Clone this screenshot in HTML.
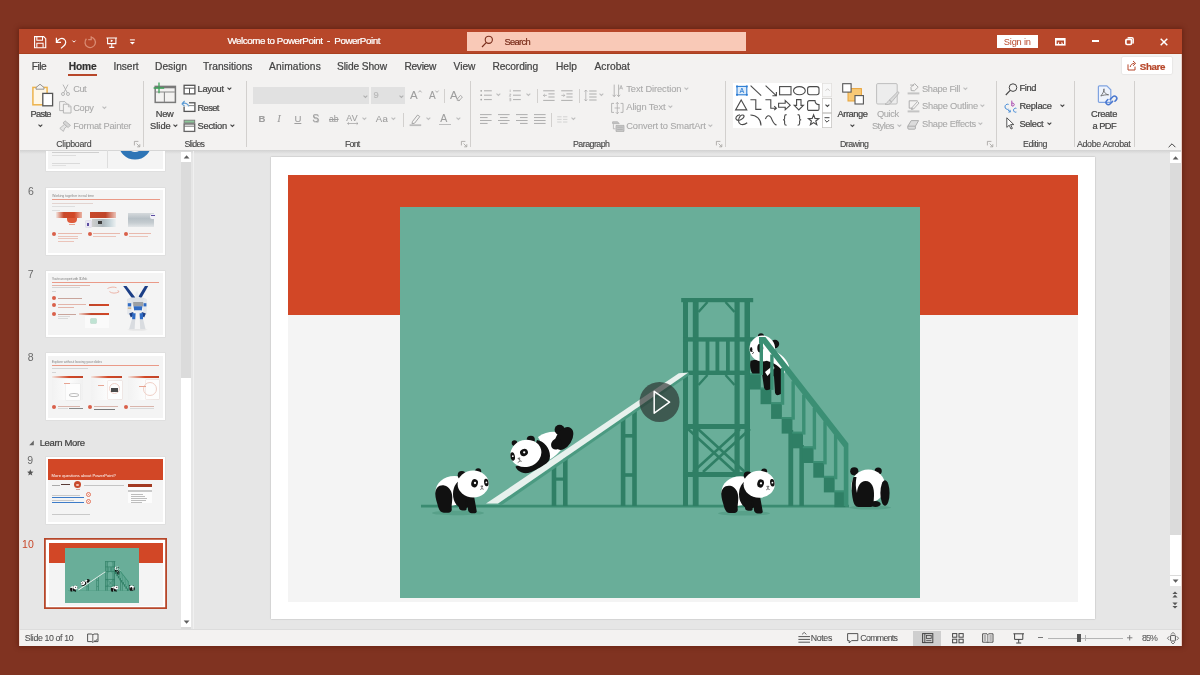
<!DOCTYPE html>
<html><head><meta charset="utf-8"><title>Welcome to PowerPoint - PowerPoint</title>
<style>
html,body{margin:0;padding:0;}
html{background:#803321;}
body{will-change:transform;width:1200px;height:675px;overflow:hidden;background:#803321;position:relative;font-family:"Liberation Sans",sans-serif;}
.r{position:absolute;display:block;overflow:visible;}
.t{position:absolute;white-space:pre;display:block;-webkit-text-stroke:0.220px currentColor;}
svg{shape-rendering:geometricPrecision;}
</style></head><body>
<div class="r" style="left:19px;top:28.5px;width:1163px;height:617.5px;background:#F3F2F1;box-shadow:0 0 5px 1px rgba(70,15,5,0.45);"></div>
<div class="r" style="left:19px;top:28.5px;width:1163px;height:25.5px;background:#B7472A;"></div>
<div class="r" style="left:19px;top:53.4px;width:1163px;height:0.6px;background:#A9401F;"></div>
<div class="r" style="left:19px;top:150px;width:1163px;height:480.2px;background:#E6E6E6;"></div>
<div class="r" style="left:19px;top:150px;width:1163px;height:3.500px;background:linear-gradient(180deg,#D2D2D2,#E6E6E6);"></div>
<div class="r" style="left:19px;top:629.4px;width:1163px;height:0.8px;background:#DCDCDC;"></div>
<div class="r" style="left:19px;top:630.2px;width:1163px;height:15.8px;background:#F3F2F1;"></div>
<svg class="r" style="left:33.8px;top:36.2px;" width="12.3" height="12.3" viewBox="0 0 13 13"><path d="M0.6 0.6h9.6l2.2 2.2v9.6h-11.8z" fill="none" stroke="#fff" stroke-width="1.2"/><path d="M3 0.8v3.8h6v-3.8M3 12.2v-4.6h6.6v4.6" fill="none" stroke="#fff" stroke-width="1.1"/></svg>
<svg class="r" style="left:55.3px;top:34.6px;" width="13" height="14" viewBox="0 0 14 15"><path d="M1.5 3v5h5" fill="none" stroke="#fff" stroke-width="1.3"/><path d="M1.8 7.6c2-3.6 5.4-4.8 8-3.2 2.6 1.8 2.2 5.2-0.4 7.4l-3 2.6" fill="none" stroke="#fff" stroke-width="1.3"/></svg>
<svg class="r" style="left:72.3px;top:39.9px;" width="4" height="3.2" viewBox="0 0 5 4"><path d="M0.5 0.7l2 2 2-2" fill="none" stroke="#fff" stroke-width="1.200"/></svg>
<svg class="r" style="left:84px;top:36px;" width="12" height="13" viewBox="0 0 12 13"><path d="M7 1.2a5.2 5.2 0 1 1 -4.6 1.6M7.2 0.2v3.4h-3" fill="none" stroke="#D98B73" stroke-width="1.3"/></svg>
<svg class="r" style="left:106px;top:36.6px;" width="11.5" height="11.7" viewBox="0 0 13 13"><path d="M0.5 1h12M1.8 1v6.4h9.4v-6.4M6.5 7.4v4M3.6 11.6h5.8" fill="none" stroke="#fff" stroke-width="1.2"/><path d="M5.4 2.6v3.2l2.8-1.6z" fill="#fff"/></svg>
<svg class="r" style="left:129.3px;top:38.6px;" width="7" height="8" viewBox="0 0 7 8"><path d="M0.900 0.900h5" stroke="#fff" stroke-width="1"/><path d="M0.900 3l2.500 2.600 2.500-2.600z" fill="#fff"/></svg>
<span class="t" style="left:227.50px;top:34.00px;font-size:9.8px;line-height:13px;color:#fff;letter-spacing:-0.449px;">Welcome to PowerPoint  -  PowerPoint</span>
<div class="r" style="left:467px;top:32px;width:279px;height:19px;background:#F9C9B7;"></div>
<svg class="r" style="left:481px;top:35px;" width="13" height="13" viewBox="0 0 13 13"><circle cx="7.8" cy="4.8" r="3.6" fill="none" stroke="#7A2E1C" stroke-width="1.1"/><path d="M5.2 7.6l-4.2 4.4" stroke="#7A2E1C" stroke-width="1.2"/></svg>
<span class="t" style="left:504.50px;top:35.50px;font-size:9.3px;line-height:12px;color:#7A2E1C;letter-spacing:-0.661px;">Search</span>
<div class="r" style="left:997px;top:35px;width:41px;height:13px;background:#fff;"></div>
<span class="t" style="left:1003.80px;top:35.60px;font-size:9.3px;line-height:12px;color:#B9492C;letter-spacing:-0.205px;-webkit-text-stroke:0;">Sign in</span>
<svg class="r" style="left:1054.8px;top:37.8px;" width="10.6" height="7.6" viewBox="0 0 10.6 7.6"><rect x="0.800" y="0.800" width="9" height="6" fill="none" stroke="#fff" stroke-width="1.600"/><path d="M0.800 1.600h9" stroke="#fff" stroke-width="1.800"/><path d="M2.600 5.200l1.500-1.500v3zM8 5.200l-1.500-1.500v3z" fill="#fff"/></svg>
<div class="r" style="left:1091.6px;top:39.9px;width:7.4px;height:1.7px;background:#fff;"></div>
<svg class="r" style="left:1125px;top:37px;" width="9" height="8.5" viewBox="0 0 9 8.5"><rect x="0.900" y="2.300" width="5.600" height="5.200" rx="1.200" fill="none" stroke="#fff" stroke-width="1.700"/><path d="M2.800 1.200a1 1 0 0 1 0.800 -0.400h3.400a1.200 1.200 0 0 1 1.200 1.200v3.400a1 1 0 0 1 -0.600 0.900" fill="none" stroke="#fff" stroke-width="1.400"/></svg>
<svg class="r" style="left:1160.2px;top:37.8px;" width="7.8" height="7.8" viewBox="0 0 7.8 7.8"><path d="M0.700 0.700l6.600 6.600M7.300 0.700l-6.600 6.600" stroke="#fff" stroke-width="1.500"/></svg>
<span class="t" style="left:31.70px;top:59.70px;font-size:10.2px;line-height:13px;color:#444;letter-spacing:-0.484px;">File</span>
<span class="t" style="left:68.70px;top:59.70px;font-size:10.2px;line-height:13px;color:#333;letter-spacing:-0.085px;font-weight:bold;">Home</span>
<span class="t" style="left:113.40px;top:59.70px;font-size:10.2px;line-height:13px;color:#444;letter-spacing:-0.052px;">Insert</span>
<span class="t" style="left:155.00px;top:59.70px;font-size:10.2px;line-height:13px;color:#444;letter-spacing:0.041px;">Design</span>
<span class="t" style="left:203.00px;top:59.70px;font-size:10.2px;line-height:13px;color:#444;letter-spacing:-0.001px;">Transitions</span>
<span class="t" style="left:269.00px;top:59.70px;font-size:10.2px;line-height:13px;color:#444;letter-spacing:0.154px;">Animations</span>
<span class="t" style="left:337.00px;top:59.70px;font-size:10.2px;line-height:13px;color:#444;letter-spacing:-0.103px;">Slide Show</span>
<span class="t" style="left:404.50px;top:59.70px;font-size:10.2px;line-height:13px;color:#444;letter-spacing:-0.324px;">Review</span>
<span class="t" style="left:453.50px;top:59.70px;font-size:10.2px;line-height:13px;color:#444;letter-spacing:0.019px;">View</span>
<span class="t" style="left:492.50px;top:59.70px;font-size:10.2px;line-height:13px;color:#444;letter-spacing:-0.110px;">Recording</span>
<span class="t" style="left:556.00px;top:59.70px;font-size:10.2px;line-height:13px;color:#444;letter-spacing:0.005px;">Help</span>
<span class="t" style="left:594.50px;top:59.70px;font-size:10.2px;line-height:13px;color:#444;letter-spacing:0.050px;">Acrobat</span>
<div class="r" style="left:68px;top:74.3px;width:29.3px;height:2.1px;background:#B7472A;"></div>
<div class="r" style="left:1122.2px;top:56.8px;width:50px;height:17.2px;background:#fff;box-shadow:0 0 1.500px rgba(0,0,0,0.220);border-radius:1px;"></div>
<svg class="r" style="left:1127px;top:60px;" width="10" height="11" viewBox="0 0 10 11"><path d="M1 4.4v5.6h7v-3.4M3.2 7c0.4-2.4 2-3.6 4.2-3.6M6 1l2.6 2.4-2.6 2.4" fill="none" stroke="#B7472A" stroke-width="1"/></svg>
<span class="t" style="left:1139.80px;top:59.70px;font-size:9.8px;line-height:13px;color:#B7472A;letter-spacing:-0.408px;font-weight:bold;">Share</span>
<div class="r" style="left:142.5px;top:80.5px;width:0.9px;height:66px;background:#D2D0CE;"></div>
<div class="r" style="left:246.3px;top:80.5px;width:0.9px;height:66px;background:#D2D0CE;"></div>
<div class="r" style="left:470px;top:80.5px;width:0.9px;height:66px;background:#D2D0CE;"></div>
<div class="r" style="left:724.8px;top:80.5px;width:0.9px;height:66px;background:#D2D0CE;"></div>
<div class="r" style="left:996.2px;top:80.5px;width:0.9px;height:66px;background:#D2D0CE;"></div>
<div class="r" style="left:1074.4px;top:80.5px;width:0.9px;height:66px;background:#D2D0CE;"></div>
<div class="r" style="left:1133.5px;top:80.5px;width:0.9px;height:66px;background:#D2D0CE;"></div>
<span class="t" style="left:56.30px;top:138.80px;font-size:8.8px;line-height:11px;color:#444;letter-spacing:-0.296px;-webkit-text-stroke:0.100px currentColor;">Clipboard</span>
<svg class="r" style="left:133.8px;top:141px;" width="6.5" height="6.5" viewBox="0 0 6.5 6.5"><path d="M0.4 4.4v-4h4" fill="none" stroke="#A19F9D" stroke-width="0.800"/><path d="M2.6 2.6l3 3M5.8 3.2v2.6h-2.6" fill="none" stroke="#A19F9D" stroke-width="0.800"/></svg>
<span class="t" style="left:184.50px;top:138.80px;font-size:8.8px;line-height:11px;color:#444;letter-spacing:-0.695px;-webkit-text-stroke:0.100px currentColor;">Slides</span>
<span class="t" style="left:345.00px;top:138.80px;font-size:8.8px;line-height:11px;color:#444;letter-spacing:-0.777px;-webkit-text-stroke:0.100px currentColor;">Font</span>
<svg class="r" style="left:461.2px;top:141px;" width="6.5" height="6.5" viewBox="0 0 6.5 6.5"><path d="M0.4 4.4v-4h4" fill="none" stroke="#A19F9D" stroke-width="0.800"/><path d="M2.6 2.6l3 3M5.8 3.2v2.6h-2.6" fill="none" stroke="#A19F9D" stroke-width="0.800"/></svg>
<span class="t" style="left:573.00px;top:138.80px;font-size:8.8px;line-height:11px;color:#444;letter-spacing:-0.511px;-webkit-text-stroke:0.100px currentColor;">Paragraph</span>
<svg class="r" style="left:715.8px;top:141px;" width="6.5" height="6.5" viewBox="0 0 6.5 6.5"><path d="M0.4 4.4v-4h4" fill="none" stroke="#A19F9D" stroke-width="0.800"/><path d="M2.6 2.6l3 3M5.8 3.2v2.6h-2.6" fill="none" stroke="#A19F9D" stroke-width="0.800"/></svg>
<span class="t" style="left:840.00px;top:138.80px;font-size:8.8px;line-height:11px;color:#444;letter-spacing:-0.569px;-webkit-text-stroke:0.100px currentColor;">Drawing</span>
<svg class="r" style="left:986.5px;top:141px;" width="6.5" height="6.5" viewBox="0 0 6.5 6.5"><path d="M0.4 4.4v-4h4" fill="none" stroke="#A19F9D" stroke-width="0.800"/><path d="M2.6 2.6l3 3M5.8 3.2v2.6h-2.6" fill="none" stroke="#A19F9D" stroke-width="0.800"/></svg>
<span class="t" style="left:1023.00px;top:138.80px;font-size:8.8px;line-height:11px;color:#444;letter-spacing:-0.415px;-webkit-text-stroke:0.100px currentColor;">Editing</span>
<span class="t" style="left:1077.00px;top:138.80px;font-size:8.8px;line-height:11px;color:#444;letter-spacing:-0.333px;-webkit-text-stroke:0.100px currentColor;">Adobe Acrobat</span>
<svg class="r" style="left:1167.5px;top:142.5px;" width="8" height="5" viewBox="0 0 8 5"><path d="M0.6 4.2l3.4-3.4 3.4 3.4" fill="none" stroke="#444" stroke-width="1"/></svg>
<span class="t" style="left:30.50px;top:107.50px;font-size:9.3px;line-height:12px;color:#444444;letter-spacing:-0.696px;">Paste</span>
<svg class="r" style="left:37.6px;top:123.5px;" width="4.8" height="3.2" viewBox="0 0 4.8 3.2"><path d="M0.500 0.600l1.900 1.900 1.900-1.900" fill="none" stroke="#444" stroke-width="1.050"/></svg>
<span class="t" style="left:73.20px;top:83.20px;font-size:9.3px;line-height:12px;color:#A9A9A9;letter-spacing:-0.491px;-webkit-text-stroke:0.080px currentColor;">Cut</span>
<span class="t" style="left:73.20px;top:101.70px;font-size:9.3px;line-height:12px;color:#A9A9A9;letter-spacing:-0.303px;-webkit-text-stroke:0.080px currentColor;">Copy</span>
<svg class="r" style="left:102.1px;top:105.8px;" width="4.8" height="3.2" viewBox="0 0 4.8 3.2"><path d="M0.500 0.600l1.900 1.900 1.900-1.900" fill="none" stroke="#BDBDBD" stroke-width="1.050"/></svg>
<span class="t" style="left:73.20px;top:119.70px;font-size:9.3px;line-height:12px;color:#A9A9A9;letter-spacing:-0.250px;-webkit-text-stroke:0.080px currentColor;">Format Painter</span>
<span class="t" style="left:155.80px;top:107.50px;font-size:9.3px;line-height:12px;color:#444444;letter-spacing:-0.368px;">New</span>
<span class="t" style="left:150.00px;top:119.70px;font-size:9.3px;line-height:12px;color:#444444;letter-spacing:0.024px;">Slide</span>
<svg class="r" style="left:172.6px;top:123.8px;" width="4.8" height="3.2" viewBox="0 0 4.8 3.2"><path d="M0.500 0.600l1.900 1.900 1.900-1.900" fill="none" stroke="#444" stroke-width="1.050"/></svg>
<span class="t" style="left:197.50px;top:83.20px;font-size:9.3px;line-height:12px;color:#444444;letter-spacing:-0.287px;">Layout</span>
<svg class="r" style="left:226.9px;top:87.3px;" width="4.8" height="3.2" viewBox="0 0 4.8 3.2"><path d="M0.500 0.600l1.900 1.900 1.900-1.900" fill="none" stroke="#444" stroke-width="1.050"/></svg>
<span class="t" style="left:197.50px;top:101.70px;font-size:9.3px;line-height:12px;color:#444444;letter-spacing:-0.619px;">Reset</span>
<span class="t" style="left:197.50px;top:119.70px;font-size:9.3px;line-height:12px;color:#444444;letter-spacing:-0.217px;">Section</span>
<svg class="r" style="left:230.1px;top:123.8px;" width="4.8" height="3.2" viewBox="0 0 4.8 3.2"><path d="M0.500 0.600l1.900 1.900 1.900-1.900" fill="none" stroke="#444" stroke-width="1.050"/></svg>
<div class="r" style="left:253px;top:87px;width:116.3px;height:16.8px;background:#E1E1E1;"></div>
<svg class="r" style="left:362.6px;top:94.5px;" width="4.8" height="3.2" viewBox="0 0 4.8 3.2"><path d="M0.500 0.600l1.900 1.900 1.900-1.900" fill="none" stroke="#B0B0B0" stroke-width="1.050"/></svg>
<div class="r" style="left:371.3px;top:87px;width:33.7px;height:16.8px;background:#E1E1E1;"></div>
<svg class="r" style="left:398.6px;top:94.5px;" width="4.8" height="3.2" viewBox="0 0 4.8 3.2"><path d="M0.500 0.600l1.900 1.900 1.900-1.900" fill="none" stroke="#B0B0B0" stroke-width="1.050"/></svg>
<span class="t" style="left:373.60px;top:89.20px;font-size:9.3px;line-height:12px;color:#B9B9B9;letter-spacing:0.000px;">9</span>
<span class="t" style="left:410.00px;top:87.70px;font-size:11.5px;line-height:15px;color:#9E9E9E;letter-spacing:0.000px;-webkit-text-stroke:0.080px currentColor;">A</span>
<svg class="r" style="left:417.6px;top:89.5px;" width="4" height="3" viewBox="0 0 4 3"><path d="M0.4 2.4l1.6-1.8 1.6 1.8" fill="none" stroke="#9E9E9E" stroke-width="0.8"/></svg>
<span class="t" style="left:429.00px;top:89.30px;font-size:10px;line-height:13px;color:#9E9E9E;letter-spacing:0.000px;-webkit-text-stroke:0.080px currentColor;">A</span>
<svg class="r" style="left:435.4px;top:89.5px;" width="4" height="3" viewBox="0 0 4 3"><path d="M0.4 0.6l1.6 1.8 1.6-1.8" fill="none" stroke="#9E9E9E" stroke-width="0.8"/></svg>
<div class="r" style="left:444.2px;top:88.8px;width:0.9px;height:13.8px;background:#D2D0CE;"></div>
<span class="t" style="left:450.00px;top:87.70px;font-size:11.5px;line-height:15px;color:#9E9E9E;letter-spacing:0.000px;-webkit-text-stroke:0.080px currentColor;">A</span>
<svg class="r" style="left:456px;top:94px;" width="7" height="7" viewBox="0 0 7 7"><path d="M1 5.4l3.4-4 2 1.6-3.4 4zM0.8 6.2h3" fill="none" stroke="#9E9E9E" stroke-width="0.8"/></svg>
<span class="t" style="left:258.60px;top:113.30px;font-size:9.6px;line-height:12px;color:#9E9E9E;letter-spacing:0.000px;font-weight:bold;-webkit-text-stroke:0.080px currentColor;">B</span>
<span class="t" style="left:277.30px;top:113.30px;font-size:9.6px;line-height:12px;color:#9E9E9E;letter-spacing:0.000px;font-style:italic;font-family:'Liberation Serif',serif;font-size:10.5px;-webkit-text-stroke:0.080px currentColor;">I</span>
<span class="t" style="left:294.40px;top:113.30px;font-size:9.6px;line-height:12px;color:#9E9E9E;letter-spacing:0.000px;text-decoration:underline;-webkit-text-stroke:0.080px currentColor;">U</span>
<span class="t" style="left:312.20px;top:111.70px;font-size:10.4px;line-height:14px;color:#9E9E9E;letter-spacing:0.000px;text-shadow:0.500px 0.500px 0.500px #C8C8C8;-webkit-text-stroke:0.080px currentColor;">S</span>
<span class="t" style="left:329.00px;top:114.00px;font-size:8.6px;line-height:11px;color:#9E9E9E;letter-spacing:0.000px;text-decoration:line-through;-webkit-text-stroke:0.080px currentColor;">ab</span>
<span class="t" style="left:346.20px;top:112.60px;font-size:8.8px;line-height:11px;color:#9E9E9E;letter-spacing:0.457px;-webkit-text-stroke:0.100px currentColor;-webkit-text-stroke:0.080px currentColor;">AV</span>
<svg class="r" style="left:346.5px;top:122.2px;" width="11.5" height="3" viewBox="0 0 11.5 3"><path d="M0.6 1.5h10.4M2 0.4l-1.4 1.1 1.4 1.1M9.6 0.4l1.4 1.1-1.4 1.1" fill="none" stroke="#9E9E9E" stroke-width="0.7"/></svg>
<svg class="r" style="left:361.9px;top:117.3px;" width="4.8" height="3.2" viewBox="0 0 4.8 3.2"><path d="M0.500 0.600l1.900 1.900 1.900-1.900" fill="none" stroke="#BDBDBD" stroke-width="1.050"/></svg>
<span class="t" style="left:375.80px;top:113.30px;font-size:9.6px;line-height:12px;color:#9E9E9E;letter-spacing:0.329px;-webkit-text-stroke:0.080px currentColor;">Aa</span>
<svg class="r" style="left:390.9px;top:117.3px;" width="4.8" height="3.2" viewBox="0 0 4.8 3.2"><path d="M0.500 0.600l1.900 1.900 1.900-1.900" fill="none" stroke="#BDBDBD" stroke-width="1.050"/></svg>
<div class="r" style="left:403.2px;top:112.5px;width:0.9px;height:14.5px;background:#D2D0CE;"></div>
<svg class="r" style="left:409px;top:112.5px;" width="13" height="13.5" viewBox="0 0 13 13.5"><path d="M3.4 8.6l5.2-6.6 2.2 1.6-5.2 6.6-2.6 0.6z" fill="none" stroke="#9E9E9E" stroke-width="0.9"/><path d="M0.6 12.2h11.6" stroke="#BDBDBD" stroke-width="1.8"/></svg>
<svg class="r" style="left:426.4px;top:117.3px;" width="4.8" height="3.2" viewBox="0 0 4.8 3.2"><path d="M0.500 0.600l1.900 1.900 1.900-1.900" fill="none" stroke="#BDBDBD" stroke-width="1.050"/></svg>
<span class="t" style="left:440.20px;top:111.00px;font-size:10.6px;line-height:14px;color:#9E9E9E;letter-spacing:0.000px;-webkit-text-stroke:0.080px currentColor;">A</span>
<div class="r" style="left:438.8px;top:123.6px;width:12px;height:1.8px;background:#BDBDBD;"></div>
<svg class="r" style="left:455.6px;top:117.3px;" width="4.8" height="3.2" viewBox="0 0 4.8 3.2"><path d="M0.500 0.600l1.900 1.900 1.900-1.900" fill="none" stroke="#BDBDBD" stroke-width="1.050"/></svg>
<svg class="r" style="left:479.5px;top:89px;" width="12.5" height="13" viewBox="0 0 12.5 13"><circle cx="1.2" cy="1.8" r="0.9" fill="#A6A6A6"/><circle cx="1.2" cy="6.2" r="0.9" fill="#A6A6A6"/><circle cx="1.2" cy="10.6" r="0.9" fill="#A6A6A6"/><path d="M4 1.8h7.8M4 6.2h7.8M4 10.6h7.8" stroke="#A6A6A6" stroke-width="0.9"/></svg>
<svg class="r" style="left:496.3px;top:93.3px;" width="4.8" height="3.2" viewBox="0 0 4.8 3.2"><path d="M0.500 0.600l1.900 1.900 1.900-1.900" fill="none" stroke="#BDBDBD" stroke-width="1.050"/></svg>
<svg class="r" style="left:509px;top:89px;" width="12.5" height="13" viewBox="0 0 12.5 13"><path d="M1.2 0.6v2.4M0.4 5.2h1.6l-1.6 2h1.6M0.4 9.4h1.4v2.4h-1.4M0.4 10.6h1.2" fill="none" stroke="#A6A6A6" stroke-width="0.6"/><path d="M4 1.8h7.8M4 6.2h7.8M4 10.6h7.8" stroke="#A6A6A6" stroke-width="0.9"/></svg>
<svg class="r" style="left:525.6px;top:93.3px;" width="4.8" height="3.2" viewBox="0 0 4.8 3.2"><path d="M0.500 0.600l1.900 1.900 1.900-1.900" fill="none" stroke="#BDBDBD" stroke-width="1.050"/></svg>
<div class="r" style="left:537px;top:88.8px;width:0.9px;height:13.8px;background:#D2D0CE;"></div>
<svg class="r" style="left:543px;top:89.5px;" width="12" height="12.5" viewBox="0 0 12 12.5"><path d="M0.2 0.8h11.4M5.4 3.9h6.2M5.4 7h6.2M0.2 10.4h11.4" stroke="#A6A6A6" stroke-width="0.9"/><path d="M3.8 5.4h-3.4M1.8 4l-1.4 1.4 1.4 1.4" fill="none" stroke="#A6A6A6" stroke-width="0.7"/></svg>
<svg class="r" style="left:561px;top:89.5px;" width="12" height="12.5" viewBox="0 0 12 12.5"><path d="M0.2 0.8h11.4M5.4 3.9h6.2M5.4 7h6.2M0.2 10.4h11.4" stroke="#A6A6A6" stroke-width="0.9"/><path d="M0.4 5.4h3.4M2.4 4l1.4 1.4-1.4 1.4" fill="none" stroke="#A6A6A6" stroke-width="0.7"/></svg>
<div class="r" style="left:578.7px;top:88.8px;width:0.9px;height:13.8px;background:#D2D0CE;"></div>
<svg class="r" style="left:583.5px;top:89px;" width="13.5" height="13" viewBox="0 0 13.5 13"><path d="M1.8 1v11M0.4 2.6l1.4-1.6 1.4 1.6M0.4 10.4l1.4 1.6 1.4-1.6" fill="none" stroke="#A6A6A6" stroke-width="0.7"/><path d="M5.2 2h7.4M5.2 5h7.4M5.2 8h7.4M5.2 11h7.4" stroke="#A6A6A6" stroke-width="0.9"/></svg>
<svg class="r" style="left:598.9px;top:93.3px;" width="4.8" height="3.2" viewBox="0 0 4.8 3.2"><path d="M0.500 0.600l1.900 1.900 1.900-1.900" fill="none" stroke="#BDBDBD" stroke-width="1.050"/></svg>
<svg class="r" style="left:479.5px;top:114px;" width="12" height="12.8" viewBox="0 0 12 12.8"><path d="M0 0.60h11.6" stroke="#A6A6A6" stroke-width="0.9"/><path d="M0 3.55h7.6" stroke="#A6A6A6" stroke-width="0.9"/><path d="M0 6.50h11.6" stroke="#A6A6A6" stroke-width="0.9"/><path d="M0 9.45h7.6" stroke="#A6A6A6" stroke-width="0.9"/></svg>
<svg class="r" style="left:497.5px;top:114px;" width="12" height="12.8" viewBox="0 0 12 12.8"><path d="M0 0.60h11.6" stroke="#A6A6A6" stroke-width="0.9"/><path d="M2 3.55h7.6" stroke="#A6A6A6" stroke-width="0.9"/><path d="M0 6.50h11.6" stroke="#A6A6A6" stroke-width="0.9"/><path d="M2 9.45h7.6" stroke="#A6A6A6" stroke-width="0.9"/></svg>
<svg class="r" style="left:515.6px;top:114px;" width="12" height="12.8" viewBox="0 0 12 12.8"><path d="M0 0.60h11.6" stroke="#A6A6A6" stroke-width="0.9"/><path d="M4 3.55h7.6" stroke="#A6A6A6" stroke-width="0.9"/><path d="M0 6.50h11.6" stroke="#A6A6A6" stroke-width="0.9"/><path d="M4 9.45h7.6" stroke="#A6A6A6" stroke-width="0.9"/></svg>
<svg class="r" style="left:533.8px;top:114px;" width="12" height="12.8" viewBox="0 0 12 12.8"><path d="M0 0.60h11.6" stroke="#A6A6A6" stroke-width="0.9"/><path d="M0 3.55h11.6" stroke="#A6A6A6" stroke-width="0.9"/><path d="M0 6.50h11.6" stroke="#A6A6A6" stroke-width="0.9"/><path d="M0 9.45h11.6" stroke="#A6A6A6" stroke-width="0.9"/></svg>
<div class="r" style="left:550.5px;top:112.5px;width:0.9px;height:14.5px;background:#D2D0CE;"></div>
<svg class="r" style="left:557px;top:115.5px;" width="11" height="7.5" viewBox="0 0 11 7.5"><path d="M0.200 0.800h4.400M6 0.800h4.400M0.200 3.400h4.400M6 3.400h4.400M0.200 6h4.400M6 6h4.400" stroke="#CFCFCF" stroke-width="0.900"/></svg>
<svg class="r" style="left:571.4px;top:117.3px;" width="4.8" height="3.2" viewBox="0 0 4.8 3.2"><path d="M0.500 0.600l1.900 1.900 1.900-1.900" fill="none" stroke="#BDBDBD" stroke-width="1.050"/></svg>
<svg class="r" style="left:612px;top:83.5px;" width="11" height="13.5" viewBox="0 0 11 13.5"><path d="M2.2 0.6v12M0.6 10.8l1.6 1.8 1.6-1.8M6.6 0.6v12M5 10.8l1.6 1.8 1.6-1.8" fill="none" stroke="#A6A6A6" stroke-width="0.8"/><path d="M7.6 5.4l1.5-4 1.5 4M8.1 4.2h2" fill="none" stroke="#A6A6A6" stroke-width="0.7"/></svg>
<span class="t" style="left:626.30px;top:83.20px;font-size:9.3px;line-height:12px;color:#A9A9A9;letter-spacing:-0.095px;-webkit-text-stroke:0.080px currentColor;">Text Direction</span>
<svg class="r" style="left:683.9px;top:87.3px;" width="4.8" height="3.2" viewBox="0 0 4.8 3.2"><path d="M0.500 0.600l1.900 1.900 1.900-1.900" fill="none" stroke="#BDBDBD" stroke-width="1.050"/></svg>
<svg class="r" style="left:611px;top:101.5px;" width="13" height="12" viewBox="0 0 13 12"><path d="M3 1.4h-2.4v9h2.4M9.6 1.4h2.4v9h-2.4" fill="none" stroke="#A6A6A6" stroke-width="0.8"/><path d="M6.3 0.4v11.4M4.8 2l1.5-1.6 1.5 1.6M4.8 10.2l1.5 1.6 1.5-1.6M3.6 6h5.4" fill="none" stroke="#A6A6A6" stroke-width="0.7"/></svg>
<span class="t" style="left:626.30px;top:101.20px;font-size:9.3px;line-height:12px;color:#A9A9A9;letter-spacing:-0.095px;-webkit-text-stroke:0.080px currentColor;">Align Text</span>
<svg class="r" style="left:668.4px;top:105.3px;" width="4.8" height="3.2" viewBox="0 0 4.8 3.2"><path d="M0.500 0.600l1.900 1.900 1.900-1.900" fill="none" stroke="#BDBDBD" stroke-width="1.050"/></svg>
<svg class="r" style="left:611.5px;top:120.5px;" width="12.5" height="11" viewBox="0 0 12.5 11"><path d="M0.6 0.8h5l1.6 1.8h-6.6zM4 4.4h8v6h-8z" fill="#C9C9C9" stroke="#A6A6A6" stroke-width="0.7"/><path d="M5.2 6.2h5.6M5.2 8.4h5.6M1.4 3.2v4.6h2" fill="none" stroke="#A6A6A6" stroke-width="0.7"/></svg>
<span class="t" style="left:626.30px;top:119.50px;font-size:9.3px;line-height:12px;color:#A9A9A9;letter-spacing:-0.141px;-webkit-text-stroke:0.080px currentColor;">Convert to SmartArt</span>
<svg class="r" style="left:708.4px;top:123.6px;" width="4.8" height="3.2" viewBox="0 0 4.8 3.2"><path d="M0.500 0.600l1.900 1.900 1.900-1.900" fill="none" stroke="#BDBDBD" stroke-width="1.050"/></svg>
<div class="r" style="left:732.5px;top:83px;width:89px;height:45.3px;background:#fff;"></div>
<svg class="r" style="left:735.5px;top:84.8px;" width="12" height="11.5" viewBox="0 0 12 11.5"><rect x="1" y="1.4" width="9.8" height="8.4" fill="#DCEBFA" stroke="#2B7CD3" stroke-width="1.100"/><path d="M4 8l1.9-5 1.9 5M4.6 6.4h2.6" fill="none" stroke="#2B7CD3" stroke-width="0.8"/><rect x="0.1" y="0.5" width="1.8" height="1.8" fill="#2B7CD3"/><rect x="9.9" y="0.5" width="1.8" height="1.8" fill="#2B7CD3"/><rect x="0.1" y="8.9" width="1.8" height="1.8" fill="#2B7CD3"/><rect x="9.9" y="8.9" width="1.8" height="1.8" fill="#2B7CD3"/></svg>
<svg class="r" style="left:750px;top:84.8px;" width="12" height="11.5" viewBox="0 0 12 11.5"><path d="M0.6 0.6l10.6 10" stroke="#4A4A4A" stroke-width="1.100"/></svg>
<svg class="r" style="left:764.5px;top:84.8px;" width="12" height="11.5" viewBox="0 0 12 11.5"><path d="M0.6 0.6l10.6 10M11.4 7v3.8h-4" fill="none" stroke="#4A4A4A" stroke-width="1.100"/></svg>
<svg class="r" style="left:778.5px;top:85.8px;" width="13" height="10" viewBox="0 0 13 10"><rect x="0.6" y="0.6" width="11.4" height="8.2" fill="none" stroke="#4A4A4A" stroke-width="1.100"/></svg>
<svg class="r" style="left:793px;top:85.8px;" width="13" height="10" viewBox="0 0 13 10"><ellipse cx="6.4" cy="4.7" rx="5.9" ry="4.1" fill="none" stroke="#4A4A4A" stroke-width="1.100"/></svg>
<svg class="r" style="left:807.3px;top:85.8px;" width="13" height="10" viewBox="0 0 13 10"><rect x="0.6" y="0.6" width="11.4" height="8.2" rx="2.2" fill="none" stroke="#4A4A4A" stroke-width="1.100"/></svg>
<svg class="r" style="left:735px;top:99.3px;" width="13" height="11.5" viewBox="0 0 13 11.5"><path d="M6.2 0.9l5.6 10h-11.2z" fill="none" stroke="#4A4A4A" stroke-width="1.100"/></svg>
<svg class="r" style="left:750px;top:99.3px;" width="12" height="11.5" viewBox="0 0 12 11.5"><path d="M0.4 0.8h5.4v9.6h5.6" fill="none" stroke="#4A4A4A" stroke-width="1.100"/></svg>
<svg class="r" style="left:764.5px;top:99.3px;" width="12.5" height="11.5" viewBox="0 0 12.5 11.5"><path d="M0.4 0.8h5.4v8.4h5.4M9.2 7.2l2.2 2-2.2 2" fill="none" stroke="#4A4A4A" stroke-width="1.100"/></svg>
<svg class="r" style="left:778.3px;top:99.8px;" width="13" height="11" viewBox="0 0 13 11"><path d="M0.6 3.2h6.6v-2.6l5 4.6-5 4.6v-2.6h-6.6z" fill="none" stroke="#4A4A4A" stroke-width="1.100"/></svg>
<svg class="r" style="left:794.3px;top:99.3px;" width="10" height="11.5" viewBox="0 0 10 11.5"><path d="M2.6 0.6h4.4v5.8h2.4l-4.6 4.6-4.6-4.6h2.4z" fill="none" stroke="#4A4A4A" stroke-width="1.100"/></svg>
<svg class="r" style="left:807.3px;top:99.8px;" width="13" height="11" viewBox="0 0 13 11"><path d="M2.600 0.600h5.400c0 2.600 1.600 4 4 4v4.400c0 0.800-0.600 1.400-1.400 1.400h-8.600c-0.800 0-1.400-0.600-1.400-1.400v-6.400c0-1.200 0.800-2 2-2z" fill="none" stroke="#4A4A4A" stroke-width="1.100"/></svg>
<svg class="r" style="left:735px;top:113.8px;" width="13" height="12" viewBox="0 0 13 12"><path d="M5 0.8c-4 0.6-5 3.6-3.4 5 2 1.6 6.6-0.8 7.4-3 0.6-2-2.2-2.6-3.8-0.6-2 2.6-2.6 6.6 0.4 8 2.4 1 5-0.2 6.6-1.4" fill="none" stroke="#4A4A4A" stroke-width="1.100"/></svg>
<svg class="r" style="left:750px;top:113.8px;" width="12" height="12" viewBox="0 0 12 12"><path d="M0.4 1c6 0 10.6 4.4 10.6 10.4" fill="none" stroke="#4A4A4A" stroke-width="1.100"/></svg>
<svg class="r" style="left:764.5px;top:113.8px;" width="12.5" height="12" viewBox="0 0 12.5 12"><path d="M0.4 5c1.2-3.4 3.8-4.6 5.6-1.4 1.8 3.4 2.6 7 5.6 7.4" fill="none" stroke="#4A4A4A" stroke-width="1.100"/></svg>
<svg class="r" style="left:781.5px;top:113.8px;" width="5.5" height="12" viewBox="0 0 5.5 12"><path d="M4.6 0.6c-1.6 0-2 0.6-2 1.8v2c0 1-0.6 1.4-1.6 1.4 1 0 1.6 0.4 1.6 1.4v2.2c0 1.2 0.4 1.8 2 1.8" fill="none" stroke="#4A4A4A" stroke-width="1.100"/></svg>
<svg class="r" style="left:796.5px;top:113.8px;" width="5.5" height="12" viewBox="0 0 5.5 12"><path d="M0.6 0.6c1.6 0 2 0.6 2 1.8v2c0 1 0.6 1.4 1.6 1.4-1 0-1.6 0.4-1.6 1.4v2.2c0 1.2-0.4 1.8-2 1.8" fill="none" stroke="#4A4A4A" stroke-width="1.100"/></svg>
<svg class="r" style="left:808.3px;top:113.8px;" width="11.5" height="11.5" viewBox="0 0 11.5 11.5"><path d="M5.6 0.8l1.4 3.6 3.8 0.2-3 2.4 1 3.8-3.2-2.2-3.2 2.2 1-3.8-3-2.4 3.8-0.2z" fill="none" stroke="#4A4A4A" stroke-width="1.100"/></svg>
<div class="r" style="left:822px;top:83px;width:10.3px;height:14.2px;background:#F8F8F8;box-shadow:inset 0 0 0 0.800px #E1DFDD;"></div>
<svg class="r" style="left:824.5px;top:88px;" width="5.2" height="3.5" viewBox="0 0 5.2 3.5"><path d="M0.5 2.8l2.1-2.1 2.1 2.1" fill="none" stroke="#C8C6C4" stroke-width="0.9"/></svg>
<div class="r" style="left:822px;top:97.6px;width:10.3px;height:15px;background:#fff;box-shadow:inset 0 0 0 0.8px #C8C6C4;"></div>
<svg class="r" style="left:824.8px;top:103.7px;" width="4.8" height="3.2" viewBox="0 0 4.8 3.2"><path d="M0.500 0.600l1.900 1.900 1.900-1.900" fill="none" stroke="#444" stroke-width="1.050"/></svg>
<div class="r" style="left:822px;top:113px;width:10.3px;height:15.3px;background:#fff;box-shadow:inset 0 0 0 0.8px #C8C6C4;"></div>
<svg class="r" style="left:824.3px;top:117px;" width="6" height="6.5" viewBox="0 0 6 6.5"><path d="M0.500 0.700h5" stroke="#444" stroke-width="1"/><path d="M0.800 3l2.200 2.200 2.200-2.200" fill="none" stroke="#444" stroke-width="1"/></svg>
<svg class="r" style="left:841.5px;top:82.5px;" width="22.5" height="22" viewBox="0 0 22.5 22"><rect x="6" y="5.6" width="13.4" height="12.4" fill="#F8C976" stroke="#E8A33A" stroke-width="1"/><rect x="0.7" y="0.7" width="8.4" height="8.4" fill="#fff" stroke="#555" stroke-width="1.1"/><rect x="13" y="12.6" width="8.4" height="8.4" fill="#fff" stroke="#555" stroke-width="1.1"/></svg>
<span class="t" style="left:837.50px;top:108.20px;font-size:9.3px;line-height:12px;color:#444444;letter-spacing:-0.441px;">Arrange</span>
<svg class="r" style="left:850.1px;top:123.8px;" width="4.8" height="3.2" viewBox="0 0 4.8 3.2"><path d="M0.500 0.600l1.900 1.900 1.900-1.900" fill="none" stroke="#444" stroke-width="1.050"/></svg>
<svg class="r" style="left:876px;top:82.5px;" width="24" height="23" viewBox="0 0 24 23"><rect x="0.6" y="0.6" width="20.6" height="20.4" rx="1.2" fill="#EDEDED" stroke="#BEBEBE" stroke-width="1"/><path d="M21.8 8.6c1 0.4 1.4 1.2 0.8 2l-6.8 8.2-2.4-1.8zM13.2 17.2l2.4 1.8c-1.2 2.4-4.2 3-6.6 2.2 2-0.6 2.4-2.6 4.2-4z" fill="#DADADA" stroke="#B0B0B0" stroke-width="0.8"/></svg>
<span class="t" style="left:877.00px;top:108.20px;font-size:9.3px;line-height:12px;color:#A9A9A9;letter-spacing:-0.394px;-webkit-text-stroke:0.080px currentColor;">Quick</span>
<span class="t" style="left:872.00px;top:120.10px;font-size:9.3px;line-height:12px;color:#A9A9A9;letter-spacing:-0.588px;-webkit-text-stroke:0.080px currentColor;">Styles</span>
<svg class="r" style="left:897.1px;top:124.1px;" width="4.8" height="3.2" viewBox="0 0 4.8 3.2"><path d="M0.500 0.600l1.900 1.900 1.900-1.900" fill="none" stroke="#BDBDBD" stroke-width="1.050"/></svg>
<svg class="r" style="left:907px;top:82px;" width="13" height="13" viewBox="0 0 13 13"><path d="M4 5.4l3.6-3.8 3.6 3.6-3.8 3.6-3.2-0.2zM3.2 3l3.8 0.2" fill="none" stroke="#A6A6A6" stroke-width="0.9"/><path d="M0.6 11.4h11.8" stroke="#C4C4C4" stroke-width="2"/></svg>
<span class="t" style="left:922.00px;top:82.50px;font-size:9.3px;line-height:12px;color:#A9A9A9;letter-spacing:-0.336px;-webkit-text-stroke:0.080px currentColor;">Shape Fill</span>
<svg class="r" style="left:963.4px;top:86.6px;" width="4.8" height="3.2" viewBox="0 0 4.8 3.2"><path d="M0.500 0.600l1.900 1.900 1.900-1.900" fill="none" stroke="#BDBDBD" stroke-width="1.050"/></svg>
<svg class="r" style="left:907px;top:99.5px;" width="13" height="13" viewBox="0 0 13 13"><path d="M2.2 0.8h8.4M2.2 0.8v7.4h4" fill="none" stroke="#A6A6A6" stroke-width="0.9"/><path d="M5 7.6l5.4-6 1.6 1.4-5.4 6-2.2 0.6z" fill="none" stroke="#A6A6A6" stroke-width="0.8"/><path d="M0.6 11.4h11.8" stroke="#C4C4C4" stroke-width="2"/></svg>
<span class="t" style="left:922.00px;top:100.00px;font-size:9.3px;line-height:12px;color:#A9A9A9;letter-spacing:-0.226px;-webkit-text-stroke:0.080px currentColor;">Shape Outline</span>
<svg class="r" style="left:980.1px;top:104.1px;" width="4.8" height="3.2" viewBox="0 0 4.8 3.2"><path d="M0.500 0.600l1.900 1.900 1.900-1.900" fill="none" stroke="#BDBDBD" stroke-width="1.050"/></svg>
<svg class="r" style="left:907px;top:117.5px;" width="13" height="12.5" viewBox="0 0 13 12.5"><path d="M0.8 8.2l3.4-5.6h7.4l-3.2 5.6zM0.8 8.2v2c0 0.6 0.4 1 1 1h5.8c0.6 0 0.8-0.4 0.8-1v-2" fill="#DCDCDC" stroke="#A6A6A6" stroke-width="0.9"/></svg>
<span class="t" style="left:922.00px;top:117.50px;font-size:9.3px;line-height:12px;color:#A9A9A9;letter-spacing:-0.303px;-webkit-text-stroke:0.080px currentColor;">Shape Effects</span>
<svg class="r" style="left:978.4px;top:121.6px;" width="4.8" height="3.2" viewBox="0 0 4.8 3.2"><path d="M0.500 0.600l1.900 1.900 1.900-1.900" fill="none" stroke="#BDBDBD" stroke-width="1.050"/></svg>
<svg class="r" style="left:1005px;top:82.5px;" width="13" height="12.5" viewBox="0 0 13 12.5"><circle cx="8" cy="4.6" r="3.8" fill="none" stroke="#444" stroke-width="1"/><path d="M5.2 7.4l-4.4 4.6" stroke="#444" stroke-width="1.1"/></svg>
<span class="t" style="left:1019.40px;top:82.30px;font-size:9.3px;line-height:12px;color:#444444;letter-spacing:-0.373px;">Find</span>
<svg class="r" style="left:1004px;top:99.5px;" width="13" height="13.5" viewBox="0 0 13 13.5"><path d="M4.6 4.4a2.6 2.6 0 1 0 0 4.8" fill="none" stroke="#2B7CD3" stroke-width="0.9"/><path d="M7.8 0.6v5.4M7.8 3.4a1.5 1.5 0 1 1 0 2.4" fill="none" stroke="#A23AA8" stroke-width="0.9"/><path d="M12.4 8.4a2 2 0 1 0 0 3.6" fill="none" stroke="#2B7CD3" stroke-width="0.9"/><path d="M4 10.2l2.4 1.6M6.4 11.8l-0.4-2M6.4 11.8l-2 0.4" fill="none" stroke="#2B7CD3" stroke-width="0.8"/></svg>
<span class="t" style="left:1019.40px;top:100.20px;font-size:9.3px;line-height:12px;color:#444444;letter-spacing:-0.275px;">Replace</span>
<svg class="r" style="left:1059.6px;top:104.3px;" width="4.8" height="3.2" viewBox="0 0 4.8 3.2"><path d="M0.500 0.600l1.900 1.900 1.900-1.900" fill="none" stroke="#444" stroke-width="1.050"/></svg>
<svg class="r" style="left:1006px;top:117px;" width="9" height="13" viewBox="0 0 9 13"><path d="M0.8 0.8v9.6l2.4-2.2 1.8 3.8 1.4-0.6-1.8-3.8h3.2z" fill="#fff" stroke="#444" stroke-width="0.9"/></svg>
<span class="t" style="left:1019.40px;top:117.60px;font-size:9.3px;line-height:12px;color:#444444;letter-spacing:-0.325px;">Select</span>
<svg class="r" style="left:1046.6px;top:121.7px;" width="4.8" height="3.2" viewBox="0 0 4.8 3.2"><path d="M0.500 0.600l1.900 1.900 1.900-1.900" fill="none" stroke="#444" stroke-width="1.050"/></svg>
<svg class="r" style="left:1096.5px;top:84.5px;" width="21" height="22" viewBox="0 0 21 22"><path d="M1.400 1.800a1 1 0 0 1 1 -1h7.400l4 4v11.600a1 1 0 0 1 -1 1h-10.400a1 1 0 0 1 -1 -1z" fill="#EEF3FC" stroke="#7FA3E0" stroke-width="1.200"/><path d="M3.800 11c2.200-2.600 3.400-5.200 3.200-7.200-0.800 2.200 1.200 5.600 4.600 6-2.800-0.200-5.400 0.400-7.800 1.200z" fill="none" stroke="#5A5A5A" stroke-width="0.800"/><g fill="none" stroke="#4A78D0" stroke-width="1.500" stroke-linecap="round"><path d="M13.200 14.400l2.600-2.600a2.300 2.300 0 0 1 3.300 3.300l-1.200 1.200"/><path d="M15.600 16.400l-2.600 2.600a2.300 2.300 0 0 1 -3.300 -3.300l1.200-1.200"/></g></svg>
<span class="t" style="left:1091.00px;top:107.50px;font-size:9.3px;line-height:12px;color:#444444;letter-spacing:-0.319px;">Create</span>
<span class="t" style="left:1092.60px;top:119.90px;font-size:9.3px;line-height:12px;color:#444444;letter-spacing:-0.591px;">a PDF</span>
<svg class="r" style="left:31px;top:82.5px;" width="23" height="24.5" viewBox="0 0 23 24.5"><rect x="1.900" y="4.400" width="14.200" height="17.400" fill="#FFF7E6" stroke="#EDB34C" stroke-width="1.500"/><path d="M5 4.600l4-3.400 4 3.400v1.600h-8z" fill="#F3F2F1" stroke="#8A8A8A" stroke-width="0.900"/><rect x="11.800" y="10.400" width="9.800" height="12.400" fill="#fff" stroke="#555" stroke-width="1.300"/></svg>
<svg class="r" style="left:60.5px;top:83.5px;" width="9" height="12" viewBox="0 0 9 12"><path d="M2 0.6l4.4 8.4M7 0.6l-4.4 8.4" stroke="#B0B0B0" stroke-width="0.9"/><circle cx="2" cy="10" r="1.5" fill="none" stroke="#B0B0B0" stroke-width="0.9"/><circle cx="7" cy="10" r="1.5" fill="none" stroke="#B0B0B0" stroke-width="0.9"/></svg>
<svg class="r" style="left:58.5px;top:101px;" width="13" height="12.5" viewBox="0 0 13 12.5"><path d="M0.6 0.6h5.2l2 2v7h-7.2z" fill="#F3F2F1" stroke="#B0B0B0" stroke-width="0.9"/><path d="M4.4 3.2h5.2l2.4 2.4v6.4h-7.6z" fill="#F3F2F1" stroke="#B0B0B0" stroke-width="0.9"/><path d="M9.4 3.4v2.4h2.4" fill="none" stroke="#B0B0B0" stroke-width="0.8"/></svg>
<svg class="r" style="left:59px;top:119.5px;" width="12.5" height="12" viewBox="0 0 12.5 12"><path d="M6 0.8l5.4 4.4-2.2 2.4-5.2-4.6z" fill="#D6D6D6" stroke="#B0B0B0" stroke-width="0.8"/><path d="M5.4 4.4l-4.6 4 3.6 3 1.4-3.4 2-1.4z" fill="#E4E4E4" stroke="#B0B0B0" stroke-width="0.8"/></svg>
<svg class="r" style="left:152.5px;top:81.5px;" width="24" height="22" viewBox="0 0 24 22"><rect x="2.200" y="4.400" width="20.200" height="16" fill="#F3F2F1" stroke="#7A7A7A" stroke-width="1.500"/><path d="M2.200 5.200h20.200" stroke="#7A7A7A" stroke-width="2.200"/><path d="M2.800 10h19M11.400 10v10" fill="none" stroke="#8A8A8A" stroke-width="1.100"/><path d="M6 0.600v10.600M0.600 6h10.600" stroke="#3DA35A" stroke-width="1.300"/></svg>
<svg class="r" style="left:182.5px;top:83.5px;" width="13" height="11" viewBox="0 0 13 11"><rect x="1.100" y="1.300" width="10.800" height="8.600" fill="#fff" stroke="#555" stroke-width="1.300"/><path d="M1.100 4.200h10.800M6.500 4.200v5.600" stroke="#555" stroke-width="1"/></svg>
<svg class="r" style="left:180.5px;top:100px;" width="15" height="12.5" viewBox="0 0 15 12.5"><rect x="3.100" y="2.800" width="10.800" height="8.600" fill="#fff" stroke="#555" stroke-width="1.300"/><path d="M3.100 5.600h10.800" stroke="#777" stroke-width="0.900"/><rect x="0" y="0" width="8" height="6.600" fill="#F3F2F1"/><path d="M0.800 3.800l2.800-2.800M0.800 3.800l2.800 2.400M0.800 3.800c3.600-1.400 6-0.400 7 2.600" fill="none" stroke="#5B9BD5" stroke-width="1.100"/></svg>
<svg class="r" style="left:182.5px;top:118.5px;" width="13" height="13.5" viewBox="0 0 13 13.5"><rect x="1.100" y="1.200" width="10.600" height="2.800" fill="#8CC79A" stroke="#7A7A7A" stroke-width="0.900"/><rect x="1.100" y="5" width="10.600" height="7.400" fill="#fff" stroke="#666" stroke-width="1.300"/><path d="M1.100 7.200h10.600" stroke="#777" stroke-width="1"/></svg>
<div class="r" style="left:45.6px;top:150.5px;width:119.7px;height:20.8px;background:#fff;box-shadow:0 0 0 0.5px #D8D8D8;"></div>
<div class="r" style="left:47.9px;top:150.5px;width:115.1px;height:18.5px;background:#F4F4F4;"></div>
<div class="r" style="left:107.2px;top:150px;width:0.6px;height:18px;background:#DDD;"></div>
<svg class="r" style="left:116px;top:150.5px;overflow:hidden;" width="38" height="10.5" viewBox="0 0 38 10.5"><circle cx="19" cy="-8" r="12.700" fill="none" stroke="#2E75B6" stroke-width="7.600"/></svg>
<div class="r" style="left:52px;top:151.5px;width:47px;height:0.5px;background:#CFCFCF;"></div>
<div class="r" style="left:52px;top:154.5px;width:24px;height:0.5px;background:#DDD;"></div>
<div class="r" style="left:52px;top:162.6px;width:28px;height:0.5px;background:#DADADA;"></div>
<div class="r" style="left:52px;top:165.2px;width:14px;height:0.4px;background:#E0E0E0;"></div>
<span class="t" style="left:27.90px;top:183.80px;font-size:10.5px;line-height:14px;color:#6A6A6A;letter-spacing:0.000px;-webkit-text-stroke:0;">6</span>
<div class="r" style="left:45.6px;top:187.5px;width:119.7px;height:67.5px;background:#fff;box-shadow:0 0 0 0.5px #D8D8D8;"></div>
<div class="r" style="left:47.9px;top:189.8px;width:115.1px;height:62.9px;background:#F4F4F4;"></div>
<span class="t" style="left:52.00px;top:193.50px;font-size:3.6px;line-height:5px;color:#8C8C8C;letter-spacing:-0.136px;-webkit-text-stroke:0;">Working together in real time</span>
<div class="r" style="left:52px;top:199.2px;width:107.6px;height:0.7px;background:#EA9A88;"></div>
<div class="r" style="left:52px;top:203.2px;width:40.7px;height:0.5px;background:#E3D3CF;"></div>
<div class="r" style="left:52px;top:206px;width:23px;height:0.5px;background:#DEDEDE;"></div>
<div class="r" style="left:52px;top:210.2px;width:8px;height:0.4px;background:#DEDEDE;"></div>
<div class="r" style="left:55.5px;top:212.4px;width:26.5px;height:6px;background:linear-gradient(90deg,#F4E6E1,#C8492B 30%,#D24726 70%,#E9B3A4);"></div>
<div class="r" style="left:67px;top:217.5px;width:10px;height:5.5px;background:#DE5A3A;border-radius:0 0 4px 4px;"></div>
<div class="r" style="left:69px;top:223.5px;width:6px;height:0.5px;background:#E7A492;"></div>
<div class="r" style="left:89.8px;top:212.4px;width:26.7px;height:5.6px;background:linear-gradient(90deg,#C8492B,#C0452A 60%,#EBC3B8);"></div>
<div class="r" style="left:92px;top:218.5px;width:24px;height:8px;background:linear-gradient(90deg,#CFCFCF,#AEB8BD 45%,#C8D6DB 75%,#EDF1F2);"></div>
<div class="r" style="left:85.5px;top:220.5px;width:5px;height:6.5px;background:#E9E6F2;box-shadow:0 0 0 0.5px #CFCBE0;"></div>
<div class="r" style="left:86.8px;top:222.5px;width:2.4px;height:3.5px;background:#5B4DA0;"></div>
<div class="r" style="left:98px;top:220.5px;width:4px;height:3.5px;background:#3D3D3D;"></div>
<div class="r" style="left:127.5px;top:213px;width:26.5px;height:13.5px;background:linear-gradient(180deg,#D5D9DC,#B7C0C6 40%,#C5CCD0 70%,#E2E5E7);"></div>
<div class="r" style="left:150px;top:213.5px;width:5.5px;height:5px;background:#F1F0F7;border-radius:2px;"></div>
<div class="r" style="left:150.6px;top:214.8px;width:4.4px;height:1.2px;background:#5B4DA0;"></div>
<div class="r" style="left:52px;top:231.7px;width:4px;height:4px;background:#D9604A;border-radius:50%;"></div>
<div class="r" style="left:87.8px;top:231.7px;width:4px;height:4px;background:#D9604A;border-radius:50%;"></div>
<div class="r" style="left:123.7px;top:231.7px;width:4px;height:4px;background:#D9604A;border-radius:50%;"></div>
<div class="r" style="left:57.5px;top:233px;width:24px;height:0.5px;background:#E9B9AD;"></div>
<div class="r" style="left:57.5px;top:235.6px;width:20.4px;height:0.5px;background:#EBC4BA;"></div>
<div class="r" style="left:93px;top:233px;width:27px;height:0.5px;background:#E9B9AD;"></div>
<div class="r" style="left:93px;top:235.6px;width:22.95px;height:0.5px;background:#EBC4BA;"></div>
<div class="r" style="left:129px;top:233px;width:22px;height:0.5px;background:#E9B9AD;"></div>
<div class="r" style="left:129px;top:235.6px;width:18.7px;height:0.5px;background:#EBC4BA;"></div>
<div class="r" style="left:57.5px;top:238.2px;width:20.5px;height:0.5px;background:#EBC4BA;"></div>
<div class="r" style="left:57.5px;top:240.6px;width:16.5px;height:0.5px;background:#EBC4BA;"></div>
<span class="t" style="left:27.80px;top:266.60px;font-size:10.5px;line-height:14px;color:#6A6A6A;letter-spacing:0.000px;-webkit-text-stroke:0;">7</span>
<div class="r" style="left:45.6px;top:270.5px;width:119.7px;height:66.7px;background:#fff;box-shadow:0 0 0 0.5px #D8D8D8;"></div>
<div class="r" style="left:47.9px;top:272.8px;width:115.1px;height:62.1px;background:#F4F4F4;"></div>
<span class="t" style="left:51.70px;top:276.50px;font-size:3.6px;line-height:5px;color:#8C8C8C;letter-spacing:-0.334px;-webkit-text-stroke:0;">You&#39;re an expert with 3D/Ink</span>
<div class="r" style="left:51.7px;top:282.3px;width:107.8px;height:0.7px;background:#EA9A88;"></div>
<div class="r" style="left:51.7px;top:285px;width:38.3px;height:0.5px;background:#E3B5AA;"></div>
<div class="r" style="left:51.7px;top:287px;width:28.3px;height:0.5px;background:#D5D5D5;"></div>
<div class="r" style="left:51.7px;top:291px;width:4.3px;height:0.4px;background:#D5D5D5;"></div>
<div class="r" style="left:52.2px;top:296px;width:4px;height:4px;background:#D9604A;border-radius:50%;"></div>
<div class="r" style="left:52.2px;top:302.8px;width:4px;height:4px;background:#D9604A;border-radius:50%;"></div>
<div class="r" style="left:52.2px;top:312.4px;width:4px;height:4px;background:#D9604A;border-radius:50%;"></div>
<div class="r" style="left:58px;top:297.8px;width:24px;height:0.5px;background:#C9A59C;"></div>
<div class="r" style="left:58px;top:304.3px;width:28px;height:0.5px;background:#E3B5AA;"></div>
<div class="r" style="left:58px;top:306.6px;width:16px;height:0.5px;background:#E3B5AA;"></div>
<div class="r" style="left:58px;top:313.9px;width:18px;height:0.5px;background:#C9A59C;"></div>
<div class="r" style="left:58px;top:316.4px;width:12px;height:0.5px;background:#D9D9D9;"></div>
<div class="r" style="left:58px;top:318.4px;width:10px;height:0.5px;background:#D9D9D9;"></div>
<div class="r" style="left:89px;top:303.8px;width:20px;height:2px;background:linear-gradient(90deg,#C0452A,#D24726);"></div>
<div class="r" style="left:79.4px;top:313.2px;width:29.6px;height:2px;background:linear-gradient(90deg,#F1D5CD,#C0452A 40%,#D24726);"></div>
<div class="r" style="left:85px;top:316px;width:24px;height:12px;background:#FAFAFA;"></div>
<div class="r" style="left:90.7px;top:319.4px;width:5.8px;height:3.6px;background:#BFE3D3;box-shadow:0 0 0 0.4px #7DBBA0;"></div>
<svg class="r" style="left:106px;top:286px;" width="15" height="9" viewBox="0 0 15 9"><path d="M1.5 2.5c3-1.6 6.4-1.8 9-0.8M3.4 5.6c2.6 2 6.4 2 9.6 0.2l-1.2-1.6" fill="none" stroke="#E79A88" stroke-width="0.7"/></svg>
<svg class="r" style="left:120px;top:284px" width="32" height="48" viewBox="120 284 32 48"><path d="M123.200 286.100l3.300-0.100 8.800 11.400-2.600 1.800z" fill="#1B3E86"/><path d="M148.200 286.100l-3.300-0.100-6.400 10.600 2.600 1.800z" fill="#1B3E86"/><path d="M135.800 291.500h2l0.600 6.500h-3.200z" fill="#E9ECEF"/><path d="M127.200 299l4-1.600h11.400l3.800 1.600v5.600h-19.200z" fill="#DDE1E6"/><rect x="133.200" y="302" width="12.200" height="4.300" fill="#9B9FA4"/><path d="M127.200 299.200h4.400v14.800l-2 1.600-2.400-1.600z" fill="#E4E7EB"/><path d="M143.200 299.200h3.600v14.800l-1.800 1.600-1.800-1.600z" fill="#E4E7EB"/><rect x="127.800" y="303.200" width="3.400" height="3.200" fill="#2F6BC4"/><rect x="143.600" y="303.200" width="2.800" height="3.200" fill="#2F6BC4"/><rect x="127.800" y="307.400" width="3.400" height="1.600" fill="#CDB89A"/><path d="M133.600 306.300h8.800l-0.600 4.200h-7.600z" fill="#2F6BC4"/><path d="M134.600 310.500h6.800l-0.800 2.800h-5.200z" fill="#EDEFF2"/><path d="M129.200 313.400l4-1.400 0.400 3.600-2.800 1.800z" fill="#1B3E86"/><path d="M145.800 313.400l-4-1.400-0.400 3.600 2.800 1.800z" fill="#1B3E86"/><path d="M132.200 313.200h3.400l-0.400 6.400h-3z" fill="#2F6BC4"/><path d="M139.600 313.200h3.400v6.400h-3z" fill="#2F6BC4"/><path d="M131.800 319.400h3.400l-0.600 10h-5.600z" fill="#D9DCE0"/><path d="M139.800 319.400h3.400l2.400 10h-5.400z" fill="#D9DCE0"/><ellipse cx="137.500" cy="329.800" rx="10" ry="0.900" fill="#E6E6E6"/></svg>
<span class="t" style="left:27.80px;top:349.50px;font-size:10.5px;line-height:14px;color:#6A6A6A;letter-spacing:0.000px;-webkit-text-stroke:0;">8</span>
<div class="r" style="left:45.6px;top:353.2px;width:119.7px;height:67.3px;background:#fff;box-shadow:0 0 0 0.5px #D8D8D8;"></div>
<div class="r" style="left:47.9px;top:355.5px;width:115.1px;height:62.7px;background:#F4F4F4;"></div>
<span class="t" style="left:51.70px;top:359.50px;font-size:3.6px;line-height:5px;color:#8C8C8C;letter-spacing:-0.141px;-webkit-text-stroke:0;">Explore without leaving your slides</span>
<div class="r" style="left:51.7px;top:365px;width:107.8px;height:0.7px;background:#EA9A88;"></div>
<div class="r" style="left:51.7px;top:367.8px;width:36.3px;height:0.5px;background:#D5D5D5;"></div>
<div class="r" style="left:51.7px;top:372px;width:4.3px;height:0.4px;background:#D5D5D5;"></div>
<div class="r" style="left:51.7px;top:376.3px;width:31.5px;height:2.200px;background:linear-gradient(90deg,#F4E6E1,#D24726 55%,#C0452A);"></div>
<div class="r" style="left:51.7px;top:379px;width:31.5px;height:21px;background:linear-gradient(90deg,#F2F2F2,#FCFCFC 55%,#F0F0F0);"></div>
<div class="r" style="left:90.7px;top:376.3px;width:31.0px;height:2.200px;background:linear-gradient(90deg,#F4E6E1,#D24726 55%,#C0452A);"></div>
<div class="r" style="left:90.7px;top:379px;width:31.0px;height:21px;background:linear-gradient(90deg,#F2F2F2,#FCFCFC 55%,#F0F0F0);"></div>
<div class="r" style="left:127.8px;top:376.3px;width:30.89999999999999px;height:2.200px;background:linear-gradient(90deg,#F4E6E1,#D24726 55%,#C0452A);"></div>
<div class="r" style="left:127.8px;top:379px;width:30.89999999999999px;height:21px;background:linear-gradient(90deg,#F2F2F2,#FCFCFC 55%,#F0F0F0);"></div>
<div class="r" style="left:66px;top:384px;width:14px;height:16px;background:#FDFDFD;box-shadow:0 0 0 0.4px #E3E3E3;"></div>
<div class="r" style="left:69px;top:392.5px;width:10px;height:4px;background:none;border:0.5px solid #BDBDBD;border-radius:50%;box-sizing:border-box;"></div>
<div class="r" style="left:64px;top:382.5px;width:6px;height:0.5px;background:#E7A492;"></div>
<div class="r" style="left:108px;top:381px;width:14px;height:18px;background:#FDFDFD;box-shadow:0 0 0 0.4px #E9D5CF;"></div>
<div class="r" style="left:109px;top:383px;width:11px;height:11px;background:none;border:0.5px solid #F0CFC6;border-radius:50%;box-sizing:border-box;"></div>
<div class="r" style="left:111px;top:387.5px;width:7px;height:4.5px;background:#4A4A4A;"></div>
<div class="r" style="left:98px;top:384.6px;width:6px;height:0.5px;background:#E7A492;"></div>
<div class="r" style="left:146px;top:380px;width:12.7px;height:19px;background:#FDFDFD;box-shadow:0 0 0 0.4px #E9D5CF;"></div>
<div class="r" style="left:143px;top:382px;width:14px;height:14px;background:none;border:0.5px solid #F0CFC6;border-radius:50%;box-sizing:border-box;"></div>
<div class="r" style="left:139px;top:385.8px;width:7px;height:0.5px;background:#E7A492;"></div>
<div class="r" style="left:52.2px;top:404.8px;width:4px;height:4px;background:#D9604A;border-radius:50%;"></div>
<div class="r" style="left:88px;top:404.8px;width:4px;height:4px;background:#D9604A;border-radius:50%;"></div>
<div class="r" style="left:124px;top:404.8px;width:4px;height:4px;background:#D9604A;border-radius:50%;"></div>
<div class="r" style="left:58px;top:405.8px;width:22px;height:0.5px;background:#D9B5AC;"></div>
<div class="r" style="left:94px;top:405.8px;width:24px;height:0.5px;background:#D9B5AC;"></div>
<div class="r" style="left:130px;top:405.8px;width:24px;height:0.5px;background:#D9B5AC;"></div>
<div class="r" style="left:58px;top:408.2px;width:10px;height:0.5px;background:#D9D9D9;"></div>
<div class="r" style="left:69px;top:407.8px;width:14px;height:1.1px;background:#8A8A8A;"></div>
<div class="r" style="left:94px;top:408.8px;width:21px;height:1.2px;background:#7A7A7A;"></div>
<div class="r" style="left:130px;top:408.2px;width:24px;height:0.5px;background:#D9D9D9;"></div>
<svg class="r" style="left:28.6px;top:439.5px;" width="5.4" height="6" viewBox="0 0 5.4 6"><path d="M4.8 0.6v4.600h-4.600z" fill="#666"/></svg>
<span class="t" style="left:39.70px;top:436.80px;font-size:9.5px;line-height:12px;color:#444;letter-spacing:-0.358px;">Learn More</span>
<span class="t" style="left:27.20px;top:453.30px;font-size:10.5px;line-height:14px;color:#6A6A6A;letter-spacing:0.000px;-webkit-text-stroke:0;">9</span>
<svg class="r" style="left:27.2px;top:468.7px;" width="6.6" height="6.6" viewBox="0 0 8 8"><path d="M4 0.400l1.100 2.700 2.800 0.200-2.200 1.800 0.700 2.800-2.400-1.500-2.400 1.500 0.700-2.800-2.200-1.800 2.800-0.200z" fill="#555"/></svg>
<div class="r" style="left:45.6px;top:456.6px;width:119.7px;height:67.6px;background:#fff;box-shadow:0 0 0 0.5px #D8D8D8;"></div>
<div class="r" style="left:47.9px;top:458.9px;width:115.1px;height:63px;background:#F4F4F4;"></div>
<div class="r" style="left:48.2px;top:459.4px;width:114.6px;height:20.3px;background:#D24726;"></div>
<span class="t" style="left:51.60px;top:472.80px;font-size:4.1px;line-height:5px;color:#fff;letter-spacing:0.018px;-webkit-text-stroke:0;">More questions about PowerPoint?</span>
<div class="r" style="left:51.6px;top:484.6px;width:8.4px;height:0.5px;background:#AAA;"></div>
<div class="r" style="left:61px;top:484.3px;width:9px;height:1.1px;background:#5A3C36;"></div>
<div class="r" style="left:74.1px;top:481.3px;width:7px;height:7px;background:#C8492B;border-radius:50%;"></div>
<div class="r" style="left:76.3px;top:484px;width:2.6px;height:2.4px;background:#F3C0B3;border-radius:1px;"></div>
<div class="r" style="left:76px;top:489px;width:3.5px;height:0.4px;background:#D6A195;"></div>
<div class="r" style="left:84px;top:484.6px;width:40px;height:0.5px;background:#C4C4C4;"></div>
<div class="r" style="left:51.6px;top:496.9px;width:32.4px;height:0.6px;background:#3D7CC9;"></div>
<div class="r" style="left:51.6px;top:501.7px;width:32.4px;height:0.6px;background:#3D7CC9;"></div>
<div class="r" style="left:51.6px;top:495.2px;width:28.4px;height:0.4px;background:#C9C9C9;"></div>
<div class="r" style="left:51.6px;top:500px;width:22.4px;height:0.4px;background:#C9C9C9;"></div>
<div class="r" style="left:85.9px;top:491.8px;width:5.4px;height:5.4px;background:#FBEDE8;border:0.6px solid #E2765D;border-radius:50%;box-sizing:border-box;"></div>
<div class="r" style="left:88px;top:494px;width:1.2px;height:1.2px;background:#E2765D;border-radius:50%;"></div>
<div class="r" style="left:85.9px;top:498.6px;width:5.4px;height:5.4px;background:#FBEDE8;border:0.6px solid #E2765D;border-radius:50%;box-sizing:border-box;"></div>
<div class="r" style="left:88px;top:500.8px;width:1.2px;height:1.2px;background:#E2765D;border-radius:50%;"></div>
<div class="r" style="left:128px;top:483.9px;width:23.6px;height:2.9px;background:#A33A22;"></div>
<div class="r" style="left:128px;top:486.8px;width:23.6px;height:16.7px;background:#FCFCFC;"></div>
<div class="r" style="left:128px;top:490px;width:23.6px;height:2px;background:#C9C9C9;"></div>
<div class="r" style="left:131px;top:494px;width:12px;height:0.4px;background:#BDBDBD;"></div>
<div class="r" style="left:131px;top:495.9px;width:14px;height:0.4px;background:#BDBDBD;"></div>
<div class="r" style="left:131px;top:497.8px;width:16px;height:0.4px;background:#BDBDBD;"></div>
<div class="r" style="left:131px;top:499.7px;width:15px;height:0.4px;background:#BDBDBD;"></div>
<div class="r" style="left:131px;top:501.6px;width:11px;height:0.4px;background:#BDBDBD;"></div>
<div class="r" style="left:51.6px;top:513.6px;width:38.4px;height:0.5px;background:#C9C9C9;"></div>
<span class="t" style="left:22.00px;top:536.50px;font-size:10.5px;line-height:14px;color:#C8482A;letter-spacing:0.160px;-webkit-text-stroke:0;">10</span>
<div class="r" style="left:43.5px;top:538px;width:123.7px;height:71.2px;background:#fff;box-shadow:inset 0 0 0 1.8px #B7472A;"></div>
<div class="r" style="left:48.6px;top:542.5px;width:114.6px;height:63.5px;background:#F4F4F4;"></div>
<div class="r" style="left:48.6px;top:542.5px;width:114.6px;height:20.2px;background:#D24726;"></div>
<div class="r" style="left:64.9px;top:547.5px;width:74.1px;height:55.8px;background:#69AE99;"></div>
<svg class="r" style="left:64.9px;top:547.5px" width="74.1" height="55.8" viewBox="400 207 520 391"><use href="#scene"/></svg>
<div class="r" style="left:180.8px;top:150.5px;width:10.7px;height:478.9px;background:#DBDBDB;"></div>
<div class="r" style="left:180.8px;top:151.5px;width:10.7px;height:10.8px;background:#fff;"></div>
<svg class="r" style="left:183.6px;top:155px;" width="5.2" height="4" viewBox="0 0 5.2 4"><path d="M-0.300 3.600l2.900-3.300 2.900 3.300z" fill="#5E5E5E"/></svg>
<div class="r" style="left:180.8px;top:378px;width:10.7px;height:237.6px;background:#fff;"></div>
<div class="r" style="left:180.8px;top:616.1px;width:10.7px;height:10.7px;background:#fff;"></div>
<svg class="r" style="left:183.6px;top:619.6px;" width="5.2" height="4" viewBox="0 0 5.2 4"><path d="M-0.300 0.400l2.900 3.300 2.900-3.300z" fill="#5E5E5E"/></svg>
<div class="r" style="left:193.2px;top:150.5px;width:1.2px;height:478.9px;background:#F0F0F0;"></div>
<div class="r" style="left:271px;top:156.6px;width:823.8px;height:462.6px;background:#fff;box-shadow:0 0 1.5px rgba(0,0,0,0.280);"></div>
<div class="r" style="left:287.8px;top:174.6px;width:790.2px;height:427.4px;background:#F4F4F4;"></div>
<div class="r" style="left:287.8px;top:174.6px;width:790.2px;height:140.2px;background:#D24726;"></div>
<div class="r" style="left:400px;top:207px;width:520.2px;height:391px;background:#69AE99;"></div>
<svg class="r" style="left:400px;top:207px;overflow:hidden" width="520.200" height="391" viewBox="400 207 520.200 391"><g id="scene">
<path d="M421 504.800h428v2.700h-428z" fill="#3A8B71"/>
<g fill="#2F7F65">
<rect x="551.700" y="459" width="4.600" height="47"/><rect x="563" y="451.500" width="4.600" height="54.500"/><rect x="555" y="477.500" width="9" height="3.200"/>
<rect x="620.800" y="414.500" width="4.600" height="91.500"/><rect x="632.200" y="407" width="4.600" height="99"/><rect x="624" y="434" width="9" height="3.600"/><rect x="624" y="473.200" width="9" height="3.600"/>
</g>
<g fill="#2F7F65">
<rect x="683" y="300" width="5" height="206"/><rect x="692.800" y="300" width="5.800" height="206"/>
<rect x="734.500" y="300" width="5.200" height="206"/><rect x="744.500" y="300" width="5.500" height="206"/>
<rect x="681.200" y="298" width="72" height="4.200"/>
<rect x="683" y="337.200" width="82" height="4.400"/>
<rect x="683" y="370.600" width="67" height="4.400"/>
<rect x="705.600" y="341" width="3.800" height="30"/><rect x="715.500" y="341" width="3.800" height="30"/><rect x="726" y="341" width="3.800" height="30"/>
<rect x="683" y="424" width="67" height="5"/><rect x="683" y="472" width="67" height="5"/>
<rect x="788.400" y="430" width="4.800" height="76"/><rect x="799.400" y="445" width="4.500" height="61"/>
</g>
<g stroke="#2F7F65" stroke-width="2.600" fill="none">
<path d="M688 429l47 43M740 429l-47 43M698 429l47 43M750 429l-47 43"/>
<path d="M698.500 312l9-10M734.500 312l-9-10M698.500 385l9-10M734.500 385l-9-10" stroke-width="2.400"/>
</g>
<path d="M498 503.600l190.500-131 1 2.400-188.500 130.600z" fill="#4B9A81"/>
<path d="M486 503.600h12l190.500-131-9.700 0.700z" fill="#E7F1ED"/>
<rect x="750.00" y="373.00" width="10.800" height="16.500" fill="#2F7F65"/><rect x="750.00" y="373.00" width="10.800" height="1.800" fill="#3B8F74"/><rect x="760.55" y="387.70" width="10.800" height="16.500" fill="#2F7F65"/><rect x="760.55" y="387.70" width="10.800" height="1.800" fill="#3B8F74"/><rect x="771.10" y="402.40" width="10.800" height="16.500" fill="#2F7F65"/><rect x="771.10" y="402.40" width="10.800" height="1.800" fill="#3B8F74"/><rect x="781.65" y="417.10" width="10.800" height="16.500" fill="#2F7F65"/><rect x="781.65" y="417.10" width="10.800" height="1.800" fill="#3B8F74"/><rect x="792.20" y="431.80" width="10.800" height="16.500" fill="#2F7F65"/><rect x="792.20" y="431.80" width="10.800" height="1.800" fill="#3B8F74"/><rect x="802.75" y="446.50" width="10.800" height="16.500" fill="#2F7F65"/><rect x="802.75" y="446.50" width="10.800" height="1.800" fill="#3B8F74"/><rect x="813.30" y="461.20" width="10.800" height="16.500" fill="#2F7F65"/><rect x="813.30" y="461.20" width="10.800" height="1.800" fill="#3B8F74"/><rect x="823.85" y="475.90" width="10.800" height="16.500" fill="#2F7F65"/><rect x="823.85" y="475.90" width="10.800" height="1.800" fill="#3B8F74"/><rect x="834.40" y="490.60" width="10.800" height="16.500" fill="#2F7F65"/><rect x="834.40" y="490.60" width="10.800" height="1.800" fill="#3B8F74"/>
<!-- top panda -->
<g>
<circle cx="761" cy="336.200" r="3" fill="#111"/>
<path d="M768 349c9 1.500 18 8 21 17l-5.500 8.500-17-4z" fill="#fff"/>
<path d="M750.500 361c-1 5 0 10 2 12.500h9.500l2 14c0.500 2 2 3 4 2.500l3.500-1-0.500-14 3 1.500 1 16c0.300 2 1.800 3 3.500 2.500l2.500-1c2-10 3-18 1-23.500-5-8-21-13-32-9.500z" fill="#111"/>
<path d="M765 372l8-6.500 1.500 2.500-7 8z" fill="#fff"/>
<circle cx="775" cy="344" r="4.200" fill="#111"/>
<ellipse cx="762.300" cy="348.600" rx="12.800" ry="13" fill="#fff"/>
<ellipse cx="760.300" cy="348" rx="3" ry="4.500" fill="#111"/><ellipse cx="751.200" cy="349.500" rx="1.200" ry="2.600" fill="#111"/>
<path d="M752.300 351.200l1.400 1.600-1.600 1" fill="none" stroke="#222" stroke-width="0.700"/>
</g>
<rect x="759.60" y="341.00" width="3.400" height="34.00" fill="#3B8F74"/><rect x="770.22" y="354.40" width="3.400" height="35.50" fill="#3B8F74"/><rect x="780.84" y="367.80" width="3.400" height="37.00" fill="#3B8F74"/><rect x="791.46" y="381.20" width="3.400" height="38.50" fill="#3B8F74"/><rect x="802.08" y="394.60" width="3.400" height="40.00" fill="#3B8F74"/><rect x="812.70" y="408.00" width="3.400" height="41.50" fill="#3B8F74"/><rect x="823.32" y="421.40" width="3.400" height="43.00" fill="#3B8F74"/><rect x="833.94" y="434.80" width="3.400" height="44.50" fill="#3B8F74"/>
<path d="M759 337h6.400l83 106.600v62.400h-4.600v-58.800l-80.600-103.600h-4.200z" fill="#3B8F74"/>
<!-- walking pandas -->
<g id="pw"><ellipse cx="458" cy="513" rx="26" ry="2.300" fill="#58A089"/><circle cx="478.200" cy="471.300" r="3" fill="#111"/><path d="M435.500 492c0-9 8-16 19-16 5 0 9 1 11 3l-3 25-20 3z" fill="#fff"/><path d="M435.300 494c0-6 4-9.500 9-8.500 5 1 8 6 8 12 0 5-1 8-0.500 12 0 2-1.500 3.200-3.500 3.200h-4.500c-3 0-4.800-2.500-5.800-6.500-1-4-2.700-8-2.700-12.200z" fill="#111"/><ellipse cx="463.500" cy="494" rx="10.500" ry="14.500" fill="#111"/><path d="M459 500v7.500c0 2 1.500 3 3.500 3h2.500c1.500 0 2-1.500 1.500-2.500l-1.500-8z" fill="#111"/><path d="M466.500 497l1.500 13c0.300 2 1.800 3.200 3.800 3.200h3c1.800 0 2.200-1.600 1.800-2.800l-2.600-14.400z" fill="#111"/><circle cx="461.800" cy="475.200" r="4.100" fill="#111"/><ellipse cx="473.200" cy="484" rx="15.600" ry="13.500" fill="#fff"/><ellipse cx="474.600" cy="483.200" rx="3.300" ry="4.200" transform="rotate(15 474.600 483.200)" fill="#111"/><ellipse cx="486.300" cy="482.500" rx="2.200" ry="3.800" transform="rotate(-8 486.300 482.500)" fill="#111"/><circle cx="475" cy="483" r="1.150" fill="#fff"/><circle cx="486.400" cy="482.400" r="0.900" fill="#fff"/><path d="M480.800 486h2.200l-1.100 1.300zM481.900 487.300v1.300M480.200 489.600l1.700-1 1.800 0.700" fill="none" stroke="#222" stroke-width="0.600"/></g>
<use href="#pw" transform="translate(286 0.300)"/>
<!-- sliding panda -->
<g>
<circle cx="514.500" cy="443" r="2.800" fill="#111"/>
<path d="M538 437c7-5 15-6 21-4.500l4 15c-4 5-8 9-13 12z" fill="#fff"/>
<circle cx="559.600" cy="429.800" r="5" fill="#111"/>
<ellipse cx="564" cy="438.500" rx="7.800" ry="12.500" transform="rotate(32 564 438.500)" fill="#111"/>
<ellipse cx="556.500" cy="444" rx="5" ry="6" transform="rotate(40 556.500 444)" fill="#111"/>
<path d="M537 440c7 1 13 8 13 16 0 4-2 7-6 9-5 3-11 7-16 8-4 0.500-7-0.500-9-2-2-1.500-3-3-3.500-4.500l14-6z" fill="#111"/>
<circle cx="530.800" cy="439.900" r="4.100" fill="#111"/>
<ellipse cx="525.900" cy="453.400" rx="15.600" ry="13.500" transform="rotate(-15 525.900 453.400)" fill="#fff"/>
<ellipse cx="512.700" cy="456.500" rx="2.200" ry="4.200" transform="rotate(-10 512.700 456.500)" fill="#111"/><ellipse cx="524" cy="452.500" rx="4" ry="3.500" transform="rotate(-25 524 452.500)" fill="#111"/>
<circle cx="512.800" cy="456.200" r="0.900" fill="#fff"/><circle cx="524.200" cy="452.300" r="1.150" fill="#fff"/>
<path d="M517.800 458.500l1.900-0.700 0 1.700zM519.300 459.500l0.800 1.500M517.700 462.600l2.400-1.600 1.600 0.400" fill="none" stroke="#222" stroke-width="0.600"/>
</g>
<!-- back-view panda -->
<g>
<ellipse cx="870" cy="507.600" rx="21" ry="2" fill="#58A089"/>
<circle cx="854.300" cy="471.300" r="4.100" fill="#111"/><circle cx="878.200" cy="471" r="3.600" fill="#111"/>
<ellipse cx="868.300" cy="486" rx="17" ry="16.600" fill="#fff"/>
<path d="M853.500 477c-2.500 6-2 16-0.500 23 0.800 4 2.500 7 5.500 7h12c2 0 3-1 3-3l0.500-8c0.500-8-2-15-8.500-15-5 0-8 5-8.500 12-1.500-5-1.500-11-0.500-16z" fill="#111"/>
<ellipse cx="885" cy="493" rx="4.600" ry="12.800" fill="#111"/>
<ellipse cx="875.500" cy="504" rx="5.200" ry="3" fill="#111"/>
</g>
</g><!-- play -->
<circle cx="659.500" cy="401.900" r="20" fill="rgba(38,42,40,0.640)"/>
<path d="M654.200 391.400v21.800l15.400-11z" fill="none" stroke="#fff" stroke-width="1.500" stroke-linejoin="round"/></svg>
<div class="r" style="left:1169.6px;top:150.5px;width:11.6px;height:478.9px;background:#DBDBDB;"></div>
<div class="r" style="left:1169.6px;top:152px;width:11.9px;height:11px;background:#fff;"></div>
<svg class="r" style="left:1172.9px;top:155.5px;" width="5.2" height="4" viewBox="0 0 5.2 4"><path d="M-0.300 3.600l2.900-3.300 2.900 3.300z" fill="#5E5E5E"/></svg>
<div class="r" style="left:1169.6px;top:534.5px;width:11.9px;height:40.5px;background:#fff;"></div>
<div class="r" style="left:1169.6px;top:575.6px;width:11.9px;height:10px;background:#fff;"></div>
<svg class="r" style="left:1172.9px;top:578.8px;" width="5.2" height="4" viewBox="0 0 5.2 4"><path d="M-0.300 0.400l2.900 3.300 2.900-3.300z" fill="#5E5E5E"/></svg>
<div class="r" style="left:1169.6px;top:586px;width:11.6px;height:43.4px;background:#E6E6E6;"></div>
<svg class="r" style="left:1172.4px;top:590.5px;" width="6" height="7" viewBox="0 0 6 7"><path d="M0.400 3l2.600-2.600 2.600 2.600zM0.400 6.400l2.600-2.600 2.600 2.600z" fill="#555"/></svg>
<svg class="r" style="left:1172.4px;top:602px;" width="6" height="7" viewBox="0 0 6 7"><path d="M0.400 0.600l2.600 2.600 2.600-2.600zM0.400 4l2.600 2.600 2.600-2.600z" fill="#555"/></svg>
<span class="t" style="left:24.80px;top:632.80px;font-size:8.8px;line-height:11px;color:#505050;letter-spacing:-0.387px;-webkit-text-stroke:0.080px currentColor;">Slide 10 of 10</span>
<svg class="r" style="left:87px;top:633px;" width="11.5" height="10.5" viewBox="0 0 11.5 10.5"><path d="M0.600 1h4.200l1 1 1-1h4.200v7.600h-4.200l-1 1-1-1h-4.200z" fill="none" stroke="#444" stroke-width="0.900"/><path d="M5.800 2v7" stroke="#444" stroke-width="0.800"/><path d="M7.600 7l1 1.400 1.800-2.600" fill="none" stroke="#444" stroke-width="0.800"/></svg>
<svg class="r" style="left:797.8px;top:632px;" width="12.4" height="11.5" viewBox="0 0 12.4 11.5"><path d="M4 2.400l2.200-2 2.200 2" fill="none" stroke="#444" stroke-width="0.800"/><path d="M0.400 4.600h11.600M0.400 7.400h11.600M0.400 10.200h11.600" stroke="#444" stroke-width="0.900"/></svg>
<span class="t" style="left:810.70px;top:632.80px;font-size:8.8px;line-height:11px;color:#505050;letter-spacing:-0.338px;-webkit-text-stroke:0.080px currentColor;">Notes</span>
<svg class="r" style="left:847px;top:632.5px;" width="11.5" height="11" viewBox="0 0 11.5 11"><path d="M0.600 0.600h10.200v7h-6.200l-2.400 2.400v-2.400h-1.600z" fill="none" stroke="#444" stroke-width="0.900"/></svg>
<span class="t" style="left:860.30px;top:632.80px;font-size:8.8px;line-height:11px;color:#505050;letter-spacing:-0.693px;-webkit-text-stroke:0.080px currentColor;">Comments</span>
<div class="r" style="left:912.5px;top:630.6px;width:28.8px;height:15.2px;background:#CFCFCF;"></div>
<svg class="r" style="left:921.5px;top:632.5px;" width="11.5" height="10.5" viewBox="0 0 11.5 10.5"><rect x="0.600" y="0.600" width="10.200" height="9" fill="none" stroke="#444" stroke-width="1"/><path d="M2.800 0.600v9" stroke="#444" stroke-width="0.900"/><rect x="4.400" y="2.400" width="4.800" height="3" fill="none" stroke="#444" stroke-width="0.800"/><path d="M4.200 7.600h5.200" stroke="#444" stroke-width="0.800"/></svg>
<svg class="r" style="left:951.8px;top:632.5px;" width="12.2" height="10.5" viewBox="0 0 12.2 10.5"><rect x="0.600" y="0.600" width="4.200" height="3.600" fill="none" stroke="#444" stroke-width="1"/><rect x="7" y="0.600" width="4.200" height="3.600" fill="none" stroke="#444" stroke-width="1"/><rect x="0.600" y="6.200" width="4.200" height="3.600" fill="none" stroke="#444" stroke-width="1"/><rect x="7" y="6.200" width="4.200" height="3.600" fill="none" stroke="#444" stroke-width="1"/></svg>
<svg class="r" style="left:982px;top:632.5px;" width="12" height="10.5" viewBox="0 0 12 10.5"><path d="M0.600 0.800h4.400l0.800 0.800 0.800-0.800h4.400v8.400h-4.400l-0.800 0.800-0.800-0.800h-4.400z" fill="none" stroke="#444" stroke-width="0.900"/><path d="M5.800 1.600v8.200M1.800 3h2.400M1.800 5h2.400M1.800 7h2.400M7.400 3h2.400M7.400 5h2.400M7.400 7h2.400" stroke="#444" stroke-width="0.700"/></svg>
<svg class="r" style="left:1012.5px;top:632.5px;" width="11.5" height="11" viewBox="0 0 11.5 11"><path d="M0.400 0.800h10.600M1.600 0.800v5.600h8.200v-5.600M5.700 6.400v3.400M3.200 10h5" fill="none" stroke="#444" stroke-width="1"/></svg>
<div class="r" style="left:1038px;top:637.4px;width:5.2px;height:0.9px;background:#777;"></div>
<div class="r" style="left:1048.2px;top:637.5px;width:74.5px;height:0.7px;background:#B5B5B5;"></div>
<div class="r" style="left:1084.7px;top:635px;width:0.7px;height:5.8px;background:#B5B5B5;"></div>
<div class="r" style="left:1077.2px;top:633.7px;width:4.2px;height:7.9px;background:#555;"></div>
<svg class="r" style="left:1126.8px;top:635px;" width="5.4" height="5.8" viewBox="0 0 5.4 5.8"><path d="M0 2.800h5.400M2.700 0.100v5.400" stroke="#777" stroke-width="0.900"/></svg>
<span class="t" style="left:1142.00px;top:632.80px;font-size:8.8px;line-height:11px;color:#5A5A5A;letter-spacing:-0.938px;-webkit-text-stroke:0.080px currentColor;">85%</span>
<svg class="r" style="left:1166.5px;top:631.5px;" width="12" height="12.5" viewBox="0 0 12 12.5"><rect x="3.600" y="3.400" width="4.800" height="5.600" rx="0.600" fill="none" stroke="#555" stroke-width="1"/><path d="M4 2.400l2-2 2 2M4 10l2 2 2-2M2.400 4.200l-2 2 2 2M9.600 4.200l2 2-2 2" fill="none" stroke="#555" stroke-width="0.800"/></svg>
<div class="r" style="left:19px;top:54px;width:1.3px;height:592px;background:#F1DAD2;"></div>
<div class="r" style="left:1181.2px;top:54px;width:0.8px;height:592px;background:#E9CFC7;"></div>
</body></html>
